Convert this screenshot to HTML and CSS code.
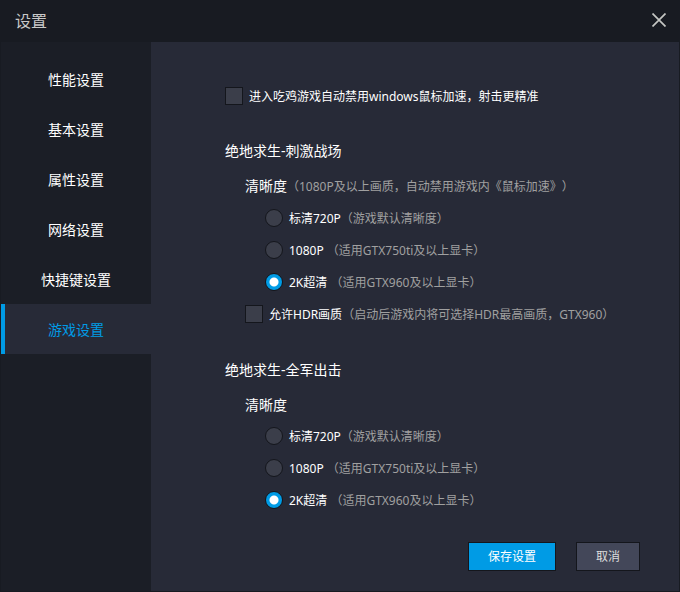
FILE: index.html
```html
<!DOCTYPE html>
<html lang="zh-CN">
<head>
    <meta charset="UTF-8">
    <meta name="viewport" content="width=device-width, initial-scale=1.0">
    <title>设置</title>
    <link rel="stylesheet" href="styles.css">
</head>
<body>
<div class="window">
    <header class="titlebar">
        <h1 class="title">设置</h1>
        <button type="button" class="close" aria-label="关闭">
            <svg width="14" height="14" viewBox="0 0 14 14">
                <path d="M.5 .5L13.5 13.5M13.5 .5L.5 13.5" fill="none" stroke="#c4c6c3" stroke-width="1.7"/>
            </svg>
        </button>
    </header>

    <div class="content">
        <nav class="sidebar">
            <a href="#performance">性能设置</a>
            <a href="#basic">基本设置</a>
            <a href="#property">属性设置</a>
            <a href="#network">网络设置</a>
            <a href="#hotkey">快捷键设置</a>
            <a href="#game" class="active">游戏设置</a>
        </nav>

        <form class="panel">
            <label class="option mouse"><input type="checkbox" name="mouse">进入吃鸡游戏自动禁用windows鼠标加速，射击更精准</label>

            <section class="game">
                <h2>绝地求生-刺激战场</h2>
                <div class="group">
                    <h3>清晰度<span class="hint">（1080P及以上画质，自动禁用游戏内《鼠标加速》）</span></h3>
                    <div class="choices">
                        <label class="option"><input type="radio" name="quality1"><span>标清720P<span class="hint">（游戏默认清晰度）</span></span></label>
                        <label class="option"><input type="radio" name="quality1"><span>1080P <span class="hint">（适用GTX750ti及以上显卡）</span></span></label>
                        <label class="option"><input type="radio" name="quality1" checked><span>2K超清 <span class="hint">（适用GTX960及以上显卡）</span></span></label>
                    </div>
                    <label class="option"><input type="checkbox" name="hdr"><span>允许HDR画质<span class="hint">（启动后游戏内将可选择HDR最高画质，GTX960）</span></span></label>
                </div>
            </section>

            <section class="game">
                <h2>绝地求生-全军出击</h2>
                <div class="group">
                    <h3>清晰度</h3>
                    <div class="choices">
                        <label class="option"><input type="radio" name="quality2"><span>标清720P<span class="hint">（游戏默认清晰度）</span></span></label>
                        <label class="option"><input type="radio" name="quality2"><span>1080P <span class="hint">（适用GTX750ti及以上显卡）</span></span></label>
                        <label class="option"><input type="radio" name="quality2" checked><span>2K超清 <span class="hint">（适用GTX960及以上显卡）</span></span></label>
                    </div>
                </div>
            </section>

            <div class="actions">
                <button type="button" class="btn save">保存设置</button>
                <button type="button" class="btn">取消</button>
            </div>
        </form>
    </div>
</div>
</body>
</html>
```

FILE: styles.css
```css
* {
    box-sizing: border-box;
}

body {
    margin: 0;
    background-color: #181b22;
    color: #fff;
    font-family: "Noto Sans", "Noto Sans CJK SC", sans-serif;
    font-size: 12px;
    line-height: 32px;
    text-spacing-trim: space-all;
}

h1, h2, h3 {
    margin: 0;
    font-weight: normal;
}

button {
    font-family: inherit;
    cursor: pointer;
}

.window {
    display: flex;
    flex-direction: column;
    min-height: 100vh;
    padding: 0 1px 1px;
    background-color: #181b22;
}

/* title bar */
.titlebar {
    display: flex;
    align-items: center;
    justify-content: space-between;
    height: 42px;
    padding: 0 13px 0 14px;
}

.title {
    color: #c8c8c8;
    font-size: 16px;
}

.close {
    display: flex;
    padding: 0 0 2px;
    border: none;
    background: none;
}

.content {
    display: flex;
    flex: 1;
}

/* left menu */
.sidebar {
    width: 150px;
    padding-top: 12px;
    background-color: #1b1e26;
}

.sidebar a {
    display: block;
    padding-top: 2px;
    color: #fff;
    font-size: 14px;
    line-height: 48px;
    text-align: center;
    text-decoration: none;
}

.sidebar .active {
    background: linear-gradient(90deg, #009be5 4px, #272a37 4px);
    color: #009be5;
}

/* settings */
.panel {
    flex: 1;
    padding: 39px 39px 20px 74px;
    background-color: #272a37;
}

.mouse {
    margin-bottom: 22px;
}

.game {
    margin-bottom: 23px;
}

.game h2, .game h3 {
    font-size: 14px;
}

.game h2 {
    margin-bottom: 3px;
}

.group {
    padding-left: 20px;
}

.choices {
    padding-left: 20px;
}

.option {
    display: flex;
    align-items: center;
    gap: 6px;
    height: 32px;
}

.hint {
    color: #a0a0a0;
    font-size: 12px;
}

input {
    appearance: none;
    width: 18px;
    height: 18px;
    margin: 0 0 2px;
    border: 1px solid #14161c;
    background-color: #3b3e4a;
}

input[type="radio"] {
    border-radius: 50%;
}

input[type="radio"]:checked {
    background: radial-gradient(circle, #fff 4px, #009be5 5px);
}

input[type="checkbox"]:checked {
    background-color: #009be5;
}

.actions {
    display: flex;
    justify-content: flex-end;
    gap: 20px;
    padding-top: 2px;
}

.btn {
    height: 29px;
    padding: 0 19px 2px;
    border: 1px solid #14161c;
    background-color: #434759;
    color: #ddd;
    font-size: 12px;
}

.save {
    background-color: #009be5;
    color: #fff;
}
```
